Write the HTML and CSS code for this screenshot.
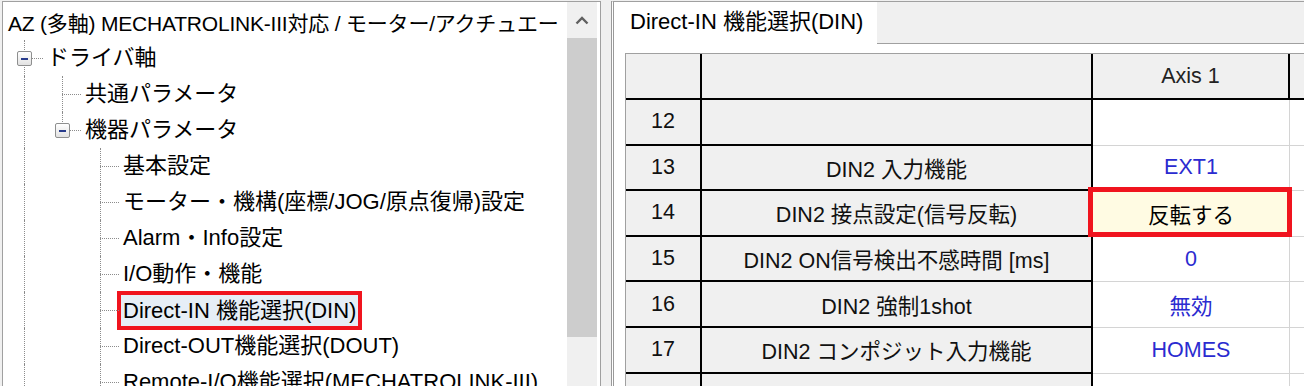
FILE: index.html
```html
<!DOCTYPE html>
<html lang="ja">
<head>
    <meta charset="UTF-8">
    <title>Direct-IN 機能選択(DIN)</title>
    <link rel="stylesheet" href="styles.css">
</head>
<body>
    <div class="window">
        <div class="tree-pane">
            <div class="tree">
                <div class="node root">AZ (多軸) MECHATROLINK-III対応 / モーター/アクチュエー</div>
                <div class="node">
                    <span class="elbow"><span class="toggle"></span></span>
                    <span class="label">ドライバ軸</span>
                </div>
                <div class="node">
                    <span class="pipe"></span><span class="elbow"></span>
                    <span class="label">共通パラメータ</span>
                </div>
                <div class="node">
                    <span class="pipe"></span><span class="elbow last"><span class="toggle"></span></span>
                    <span class="label">機器パラメータ</span>
                </div>
                <div class="node">
                    <span class="pipe"></span><span class="blank"></span><span class="elbow"></span>
                    <span class="label">基本設定</span>
                </div>
                <div class="node">
                    <span class="pipe"></span><span class="blank"></span><span class="elbow"></span>
                    <span class="label">モーター・機構(座標/JOG/原点復帰)設定</span>
                </div>
                <div class="node">
                    <span class="pipe"></span><span class="blank"></span><span class="elbow"></span>
                    <span class="label">Alarm・Info設定</span>
                </div>
                <div class="node">
                    <span class="pipe"></span><span class="blank"></span><span class="elbow"></span>
                    <span class="label">I/O動作・機能</span>
                </div>
                <div class="node">
                    <span class="pipe"></span><span class="blank"></span><span class="elbow"></span>
                    <span class="label selected">Direct-IN 機能選択(DIN)</span>
                </div>
                <div class="node">
                    <span class="pipe"></span><span class="blank"></span><span class="elbow"></span>
                    <span class="label">Direct-OUT機能選択(DOUT)</span>
                </div>
                <div class="node">
                    <span class="pipe"></span><span class="blank"></span><span class="elbow"></span>
                    <span class="label">Remote-I/O機能選択(MECHATROLINK-III)</span>
                </div>
            </div>
            <div class="scrollbar">
                <div class="scroll-arrow">
                    <svg width="14" height="9" viewBox="0 0 14 9">
                        <polyline points="1.5,7.5 7,2 12.5,7.5" fill="none" stroke="#606060" stroke-width="2.4"/>
                    </svg>
                </div>
                <div class="scroll-thumb"></div>
            </div>
        </div>
        <div class="splitter"></div>
        <div class="detail-pane">
            <div class="tabs">
                <div class="tab active">Direct-IN 機能選択(DIN)</div>
            </div>
            <div class="sheet">
                <table class="grid">
                    <colgroup>
                        <col class="c-no">
                        <col class="c-name">
                        <col class="c-axis">
                        <col class="c-more">
                    </colgroup>
                    <tr class="head">
                        <th></th>
                        <th></th>
                        <th>Axis 1</th>
                        <th class="more"></th>
                    </tr>
                    <tr>
                        <th>12</th>
                        <th></th>
                        <td></td>
                        <td></td>
                    </tr>
                    <tr>
                        <th>13</th>
                        <th>DIN2 入力機能</th>
                        <td class="val">EXT1</td>
                        <td></td>
                    </tr>
                    <tr>
                        <th>14</th>
                        <th>DIN2 接点設定(信号反転)</th>
                        <td class="current">反転する</td>
                        <td></td>
                    </tr>
                    <tr>
                        <th>15</th>
                        <th>DIN2 ON信号検出不感時間 [ms]</th>
                        <td class="val">0</td>
                        <td></td>
                    </tr>
                    <tr>
                        <th>16</th>
                        <th>DIN2 強制1shot</th>
                        <td class="val">無効</td>
                        <td></td>
                    </tr>
                    <tr>
                        <th>17</th>
                        <th>DIN2 コンポジット入力機能</th>
                        <td class="val">HOMES</td>
                        <td></td>
                    </tr>
                    <tr>
                        <th></th>
                        <th></th>
                        <td></td>
                        <td></td>
                    </tr>
                </table>
            </div>
        </div>
    </div>
</body>
</html>
```

FILE: styles.css
```css
* {
    box-sizing: border-box;
    margin: 0;
    padding: 0;
}

body {
    font-family: "Liberation Sans", "Noto Sans CJK JP", sans-serif;
    font-size: 22px;
    color: #000;
    background-color: #f0f0f0;
    overflow: hidden;
}

.window {
    display: flex;
    height: 386px;
    padding-top: 1px;
    padding-left: 2px;
    overflow: hidden;
}

/* left: tree view */

.tree-pane {
    display: flex;
    width: 599px;
    flex: none;
    background-color: #fff;
    border: 1px solid #a0a0a0;
    border-bottom: none;
}

.tree {
    flex: 1;
    min-width: 0;
    padding-top: 2px;
    overflow: hidden;
}

.node {
    display: flex;
    align-items: center;
    height: 36px;
    padding-left: 2px;
    white-space: nowrap;
}

.node.root {
    padding-left: 5px;
    font-size: 21px;
    letter-spacing: -0.2px;
}

.pipe, .blank, .elbow {
    position: relative;
    flex: none;
    width: 38px;
    height: 100%;
}

.pipe::before, .elbow::before {
    content: "";
    position: absolute;
    left: 19px;
    top: 0;
    bottom: 0;
    border-left: 1px dotted #8c8c8c;
}

.elbow.last::before {
    bottom: 50%;
}

.elbow::after {
    content: "";
    position: absolute;
    left: 19px;
    right: 0;
    top: 50%;
    border-top: 1px dotted #8c8c8c;
}

.toggle {
    position: absolute;
    z-index: 1;
    left: 12px;
    top: 11px;
    width: 15px;
    height: 15px;
    border: 1px solid #8e8f8f;
    border-radius: 2px;
    background: linear-gradient(#ffffff, #e2e2e2);
}

.toggle::after {
    content: "";
    position: absolute;
    left: 3px;
    right: 3px;
    top: 6px;
    height: 2px;
    background-color: #283c8c;
}

.label {
    margin-left: 4px;
    line-height: 36px;
}

.label.selected {
    margin-left: -2px;
    padding: 0 2px;
    line-height: 31px;
    border: 4px solid #f0141e;
    background-color: #e6eef6;
}

.scrollbar {
    display: flex;
    flex-direction: column;
    width: 30px;
    flex: none;
    margin-right: 3px;
    background-color: #f0f0f0;
}

.scroll-arrow {
    display: flex;
    align-items: center;
    justify-content: center;
    height: 36px;
}

.scroll-thumb {
    height: 299px;
    background-color: #cdcdcd;
}

.splitter {
    width: 10px;
    flex: none;
}

/* right: parameter sheet */

.detail-pane {
    flex: 1;
    min-width: 0;
    background-color: #fff;
    border-top: 1px solid #a0a0a0;
    border-left: 3px double #9a9a9a;
    overflow: hidden;
}

.tabs {
    display: flex;
    height: 42px;
    background-color: #f0f0f0;
    border-bottom: 1px solid #a0a0a0;
}

.tab {
    padding: 0 14px 0 16px;
    line-height: 40px;
    white-space: nowrap;
}

.tab.active {
    height: 42px;
    background-color: #fff;
}

.sheet {
    padding: 9px 0 0 11px;
}

.grid {
    table-layout: fixed;
    width: 716px;
    border-spacing: 0;
    font-size: 21.5px;
    border-top: 1px solid #a0a0a0;
    border-left: 1px solid #a0a0a0;
}

.c-no { width: 76px; }
.c-name { width: 391px; }
.c-axis { width: 197px; }
.c-more { width: 52px; }

.grid tr {
    height: 45.6px;
}

.grid tr.head {
    height: 46px;
}

.grid th, .grid td {
    text-align: center;
    font-weight: normal;
    white-space: nowrap;
}

.grid th {
    color: #111;
    background-color: #f0f0f0;
    border-right: 2px solid #000;
    border-bottom: 2px solid #000;
}

.grid .head th {
    color: #222;
}

.grid th.more {
    border-right: 1px solid #d4d4d4;
}

.grid td {
    background-color: #fff;
    border-right: 1px solid #d4d4d4;
    border-bottom: 1px solid #d4d4d4;
}

.grid td.val {
    color: #2b2bd0;
}

.grid td.current {
    position: relative;
    background-color: #fffbe3;
}

.grid td.current::after {
    content: "";
    position: absolute;
    left: -5px;
    right: -3px;
    top: -4px;
    bottom: -1px;
    border: 5px solid #f0141e;
}
```
